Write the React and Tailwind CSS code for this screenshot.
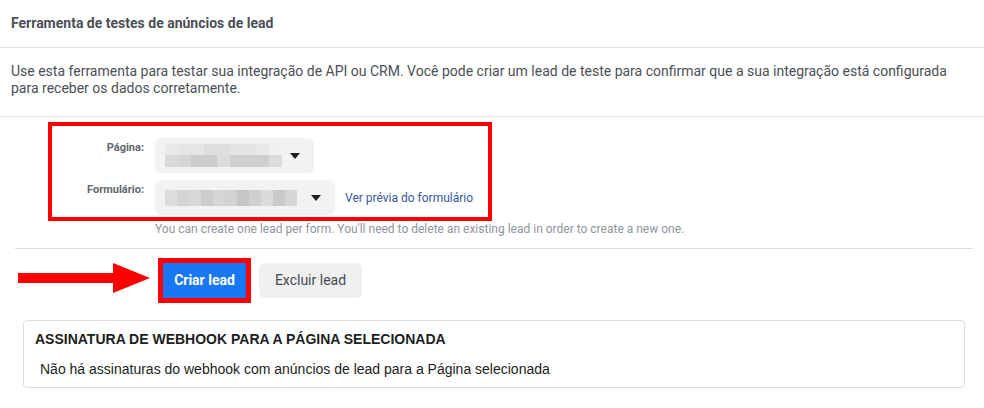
import React from 'react'

const blur1Top = ['#e9e9e9', '#e6e6e6', '#e6e6e6', '#dedede', '#dedede', '#e4e4e4', '#e4e4e4', '#e8e8e8', '#f0f0f0']
const blur1Bottom = ['#d9d9d9', '#d6d6d6', '#cccccc', '#cccccc', '#dcdcdc', '#cfcfcf', '#cfcfcf', '#cfcfcf', '#dcdcdc']
const blur2 = ['#dcdcdc', '#d4d4d4', '#d8d8d8', '#cdcdcd', '#d5d5d5', '#d3d3d3', '#c6c6c6', '#d0d0d0', '#dadada', '#cacaca', '#d6d6d6']

function Caret() {
  return (
    <svg width="10" height="6" viewBox="0 0 10 6" className="shrink-0">
      <polygon points="0,0 10,0 5,6" fill="#1c1e21" />
    </svg>
  )
}

function Arrow() {
  return (
    <svg width="132" height="31" viewBox="0 0 132 31" className="shrink-0">
      <rect x="0" y="10" width="96" height="10" fill="#ff0000" />
      <polygon points="95,0 132,15 95,30" fill="#ff0000" />
    </svg>
  )
}

export default function App() {
  return (
    <div className="w-[984px] h-[408px] bg-white overflow-hidden font-['Roboto',sans-serif] text-[#4b4f56]">
      {/* Header */}
      <div className="h-[48px] border-b border-[#e5e5e5] px-[11px] flex items-center">
        <h1 className="text-[14px] font-bold text-[#4b4f56]">Ferramenta de testes de anúncios de lead</h1>
      </div>

      {/* Description */}
      <div className="h-[69px] border-b border-[#e5e5e5] pl-[11px] pr-[30px] pt-[15px]">
        <p className="text-[14px] leading-[17px] text-[#4b4f56]">
          Use esta ferramenta para testar sua integração de API ou CRM. Você pode criar um lead de teste para confirmar que a sua integração está configurada para receber os dados corretamente.
        </p>
      </div>

      {/* Form */}
      <div className="pl-[48px] pt-[5px]">
        <div className="w-[444px] h-[99px] border-4 border-[#ff0000] flex flex-col gap-[7px] pt-[12px]">
          <div className="flex">
            <div className="w-[92px] text-right text-[11px] font-bold text-[#606770] pt-[2px]">Página:</div>
            <div className="ml-[11px] w-[159px] h-[35px] rounded-md bg-[#f2f2f2] flex items-center pl-[10px] pr-[14px] gap-[8px]">
              <div className="flex flex-col">
                <div className="flex">
                  {blur1Top.map((c, i) => (
                    <div key={i} className="w-[13px] h-[11px]" style={{ background: c }} />
                  ))}
                </div>
                <div className="flex">
                  {blur1Bottom.map((c, i) => (
                    <div key={i} className="w-[13px] h-[12px]" style={{ background: c }} />
                  ))}
                </div>
              </div>
              <div className="ml-auto"><Caret /></div>
            </div>
          </div>
          <div className="flex items-start">
            <div className="w-[92px] text-right text-[11px] font-bold text-[#606770] pt-[2px]">Formulário:</div>
            <div className="ml-[11px] w-[180px] h-[35px] rounded-md bg-[#f2f2f2] flex items-center pl-[10px] pr-[14px]">
              <div className="flex">
                {blur2.map((c, i) => (
                  <div key={i} className="w-[12px] h-[16px]" style={{ background: c }} />
                ))}
              </div>
              <div className="ml-auto"><Caret /></div>
            </div>
            <a className="ml-[10px] self-center text-[12px] text-[#365899] mt-[1px]">Ver prévia do formulário</a>
          </div>
        </div>
      </div>
      <p className="pl-[155px] text-[12px] leading-[16px] text-[#90949c]">
        You can create one lead per form. You'll need to delete an existing lead in order to create a new one.
      </p>

      {/* Divider */}
      <div className="mx-[15px] mt-[11px] w-[958px] border-t border-[#dadde1]" />

      {/* Buttons */}
      <div className="flex items-start pl-[18px] mt-[9px]">
        <div className="mt-[5px]"><Arrow /></div>
        <div className="ml-[8px] border-[5px] border-[#ff0000]">
          <button className="w-[83px] h-[35px] bg-[#1877f2] text-white text-[14px] font-bold flex items-center justify-center">
            Criar lead
          </button>
        </div>
        <button className="ml-[8px] mt-[5px] w-[103px] h-[35px] rounded-md bg-[#f0f0f0] text-[14px] text-[#444950] flex items-center justify-center">
          Excluir lead
        </button>
      </div>

      {/* Webhook box */}
      <div className="ml-[23px] mt-[17px] w-[942px] h-[68px] border border-[#dddddd] rounded-[4px] font-['Liberation_Sans',Arial,sans-serif] text-[#1d1d1d]">
        <h2 className="pl-[11px] pt-[9px] text-[14px] leading-[18px] font-bold text-[#1c1e21]">ASSINATURA DE WEBHOOK PARA A PÁGINA SELECIONADA</h2>
        <p className="pl-[16px] pt-[12px] text-[14px] leading-[18px] text-[#1c1e21]">
          Não há assinaturas do webhook com anúncios de lead para a Página selecionada
        </p>
      </div>
    </div>
  )
}
